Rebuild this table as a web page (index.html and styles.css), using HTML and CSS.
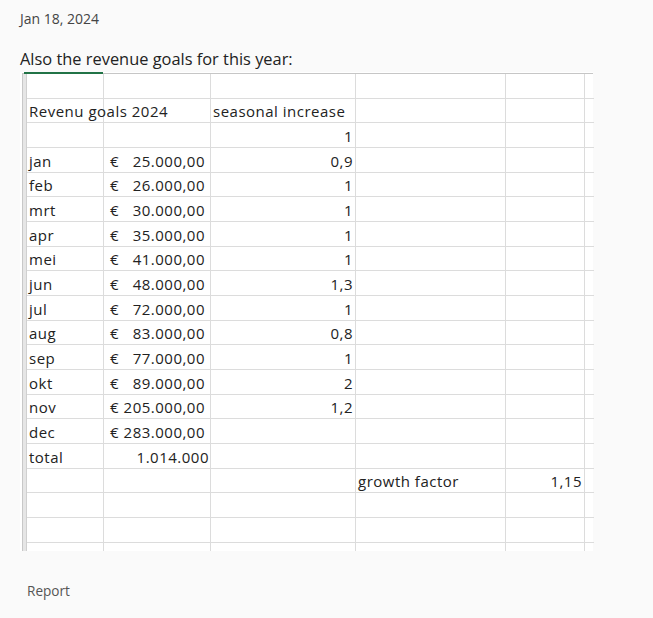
FILE: index.html
```html
<!DOCTYPE html>
<html>
<head>
<meta charset="utf-8">
<link rel="stylesheet" href="styles.css">
</head>
<body>
<div class="post">
  <div class="date">Jan 18, 2024</div>
  <p class="message">Also the revenue goals for this year:</p>
  <div class="sheet">
    <div class="sel-top"></div>
    <div class="rowhead"></div>
    <div class="grid">
      <div class="c"></div><div class="c"></div><div class="c"></div><div class="c"></div><div class="c"></div><div class="c e"></div>
      <div class="c">Revenu goals 2024</div><div class="c"></div><div class="c">seasonal increase</div><div class="c"></div><div class="c"></div><div class="c e"></div>
      <div class="c"></div><div class="c"></div><div class="c r">1</div><div class="c"></div><div class="c"></div><div class="c e"></div>
      <div class="c">jan</div><div class="c m"><span>€</span><span>25.000,00</span></div><div class="c r">0,9</div><div class="c"></div><div class="c"></div><div class="c e"></div>
      <div class="c">feb</div><div class="c m"><span>€</span><span>26.000,00</span></div><div class="c r">1</div><div class="c"></div><div class="c"></div><div class="c e"></div>
      <div class="c">mrt</div><div class="c m"><span>€</span><span>30.000,00</span></div><div class="c r">1</div><div class="c"></div><div class="c"></div><div class="c e"></div>
      <div class="c">apr</div><div class="c m"><span>€</span><span>35.000,00</span></div><div class="c r">1</div><div class="c"></div><div class="c"></div><div class="c e"></div>
      <div class="c">mei</div><div class="c m"><span>€</span><span>41.000,00</span></div><div class="c r">1</div><div class="c"></div><div class="c"></div><div class="c e"></div>
      <div class="c">jun</div><div class="c m"><span>€</span><span>48.000,00</span></div><div class="c r">1,3</div><div class="c"></div><div class="c"></div><div class="c e"></div>
      <div class="c">jul</div><div class="c m"><span>€</span><span>72.000,00</span></div><div class="c r">1</div><div class="c"></div><div class="c"></div><div class="c e"></div>
      <div class="c">aug</div><div class="c m"><span>€</span><span>83.000,00</span></div><div class="c r">0,8</div><div class="c"></div><div class="c"></div><div class="c e"></div>
      <div class="c">sep</div><div class="c m"><span>€</span><span>77.000,00</span></div><div class="c r">1</div><div class="c"></div><div class="c"></div><div class="c e"></div>
      <div class="c">okt</div><div class="c m"><span>€</span><span>89.000,00</span></div><div class="c r">2</div><div class="c"></div><div class="c"></div><div class="c e"></div>
      <div class="c">nov</div><div class="c m"><span>€</span><span>205.000,00</span></div><div class="c r">1,2</div><div class="c"></div><div class="c"></div><div class="c e"></div>
      <div class="c">dec</div><div class="c m"><span>€</span><span>283.000,00</span></div><div class="c"></div><div class="c"></div><div class="c"></div><div class="c e"></div>
      <div class="c">total</div><div class="c r tot">1.014.000</div><div class="c"></div><div class="c"></div><div class="c"></div><div class="c e"></div>
      <div class="c"></div><div class="c"></div><div class="c"></div><div class="c">growth factor</div><div class="c r">1,15</div><div class="c e"></div>
      <div class="c"></div><div class="c"></div><div class="c"></div><div class="c"></div><div class="c"></div><div class="c e"></div>
      <div class="c"></div><div class="c"></div><div class="c"></div><div class="c"></div><div class="c"></div><div class="c e"></div>
      <div class="c b"></div><div class="c b"></div><div class="c b"></div><div class="c b"></div><div class="c b"></div><div class="c b e"></div>
    </div>
  </div>
  <div class="report">Report</div>
</div>
</body>
</html>
```
FILE: styles.css
```css
html, body {
  margin: 0;
  padding: 0;
  background: #fafafa;
}
.post {
  padding: 0 0 0 20px;
  font-family: "Open Sans", "Noto Sans", sans-serif;
}
.date {
  padding-top: 9px;
  font-size: 14px;
  line-height: 20px;
  color: #444;
}
.message {
  margin: 19px 0 2px 0;
  font-size: 16.4px;
  line-height: 22px;
  color: #222;
}
.sheet {
  position: relative;
  width: 573px;
  height: 479px;
  background: #fff;
  display: flex;
  padding-top: 2px;
  box-sizing: border-box;
}
.sheet::before {
  content: "";
  position: absolute;
  left: 2px;
  right: 0;
  top: 1px;
  height: 1px;
  background: #c6c6c6;
}
.sel-top {
  position: absolute;
  left: 4px;
  top: 0;
  width: 79px;
  height: 2px;
  background: #217346;
}
.rowhead {
  width: 3px;
  margin-left: 2px;
  border-left: 1px solid #c8c8c8;
  border-right: 1px solid #d0d0d0;
  background: #e6e6e6;
  flex: none;
}
.grid {
  display: grid;
  grid-template-columns: 77px 107px 145px 150px 79px 9px;
  grid-template-rows: repeat(19, 24.68px) 8px;
  font-family: "Open Sans", "Noto Sans", sans-serif;
  font-size: 15px;
  letter-spacing: 0.5px;
  color: #222;
}
.c {
  border-right: 1px solid #dcdcdc;
  border-bottom: 1px solid #dcdcdc;
  box-sizing: border-box;
  padding: 0 3px 2px 2px;
  display: flex;
  align-items: flex-end;
  white-space: nowrap;
  line-height: 18px;
}
.c.e { border-right: 0; }
.c.b { border-bottom: 0; }
.c.r { justify-content: flex-end; padding-right: 2px; }
.c.m { justify-content: space-between; padding-left: 6px; padding-right: 5px; }
.c.tot { padding-right: 1px; }
.report {
  margin-top: 30px;
  padding-left: 7px;
  font-size: 13.6px;
  line-height: 19px;
  color: #555;
}
```
